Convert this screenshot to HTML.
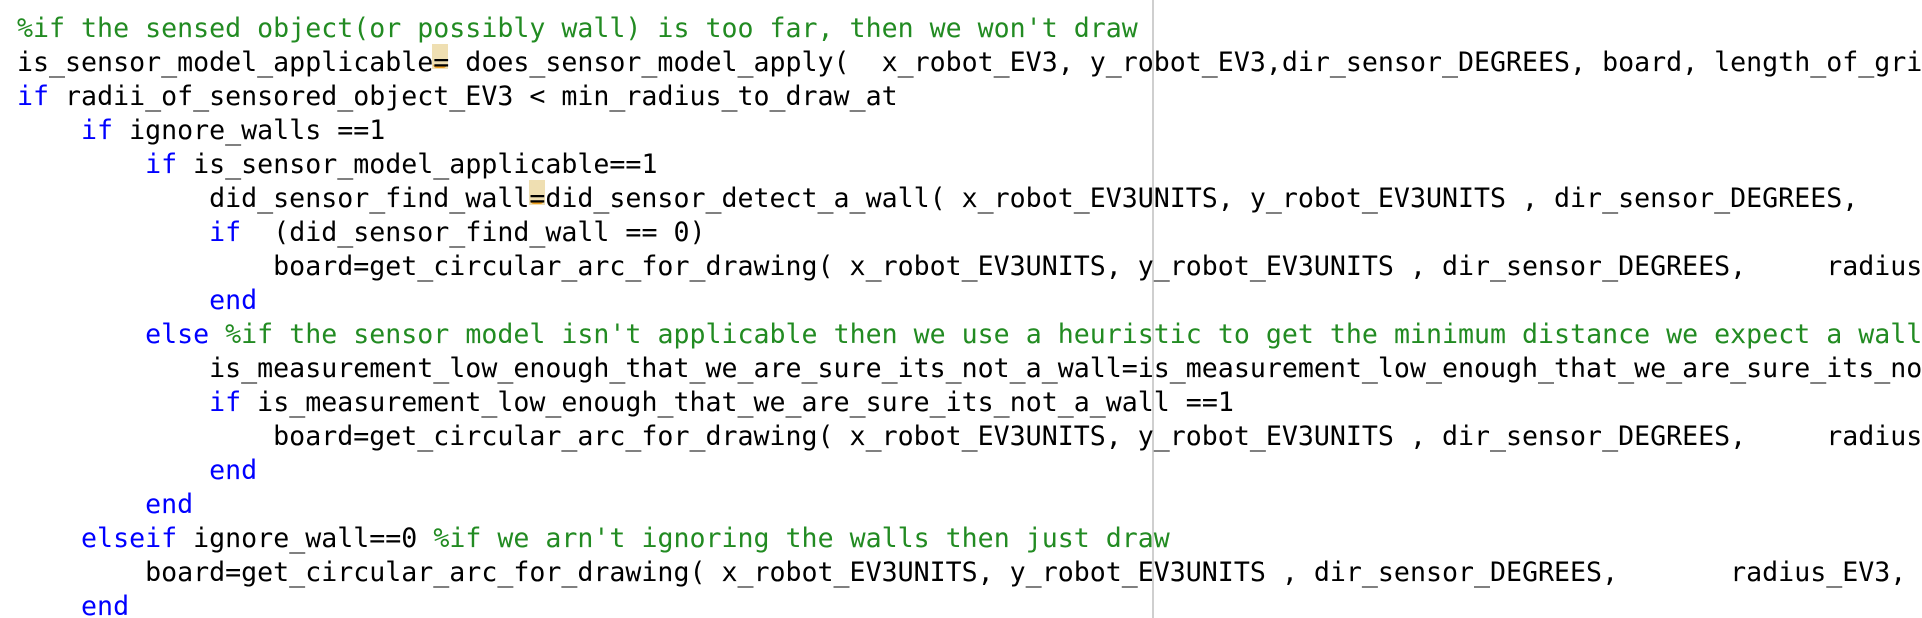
<!DOCTYPE html>
<html><head><meta charset="utf-8"><style>
html,body{margin:0;padding:0;background:#fff;width:1922px;height:618px;overflow:hidden;position:relative}
.wrap{position:absolute;left:0;top:0;width:1922px;height:618px;overflow:hidden}
pre{position:absolute;left:17px;top:12px;width:1905px;overflow:hidden;margin:0;font-family:"DejaVu Sans Mono","Liberation Mono",monospace;font-size:26.6px;line-height:34px;color:#000;white-space:pre}
.c{color:#228b22}.k{color:#0000ff}
.vl{position:absolute;left:1152px;top:0;width:2px;height:618px;background:#cfcfcf}
.hl{position:absolute;width:16px;height:25px;background:#efdfb2}
.sq{position:absolute;width:14px;height:5px;border-bottom:2px solid #f0a020;border-radius:0 0 4px 4px}
</style></head><body><div class="wrap">
<div class="hl" style="left:432px;top:44px"></div>
<div class="sq" style="left:433px;top:61px"></div>
<div class="hl" style="left:529px;top:180px"></div>
<div class="sq" style="left:530px;top:197px"></div>
<div class="vl"></div>
<pre><span class="c">%if the sensed object(or possibly wall) is too far, then we won't draw</span>
is_sensor_model_applicable= does_sensor_model_apply(  x_robot_EV3, y_robot_EV3,dir_sensor_DEGREES, board, length_of_grid
<span class="k">if</span> radii_of_sensored_object_EV3 &lt; min_radius_to_draw_at
    <span class="k">if</span> ignore_walls ==1
        <span class="k">if</span> is_sensor_model_applicable==1
            did_sensor_find_wall=did_sensor_detect_a_wall( x_robot_EV3UNITS, y_robot_EV3UNITS , dir_sensor_DEGREES,
            <span class="k">if</span>  (did_sensor_find_wall == 0)
                board=get_circular_arc_for_drawing( x_robot_EV3UNITS, y_robot_EV3UNITS , dir_sensor_DEGREES,     radius
            <span class="k">end</span>
        <span class="k">else</span> <span class="c">%if the sensor model isn't applicable then we use a heuristic to get the minimum distance we expect a wall</span>
            is_measurement_low_enough_that_we_are_sure_its_not_a_wall=is_measurement_low_enough_that_we_are_sure_its_not
            <span class="k">if</span> is_measurement_low_enough_that_we_are_sure_its_not_a_wall ==1
                board=get_circular_arc_for_drawing( x_robot_EV3UNITS, y_robot_EV3UNITS , dir_sensor_DEGREES,     radius
            <span class="k">end</span>
        <span class="k">end</span>
    <span class="k">elseif</span> ignore_wall==0 <span class="c">%if we arn't ignoring the walls then just draw</span>
        board=get_circular_arc_for_drawing( x_robot_EV3UNITS, y_robot_EV3UNITS , dir_sensor_DEGREES,       radius_EV3, s
    <span class="k">end</span></pre>
</div></body></html>
